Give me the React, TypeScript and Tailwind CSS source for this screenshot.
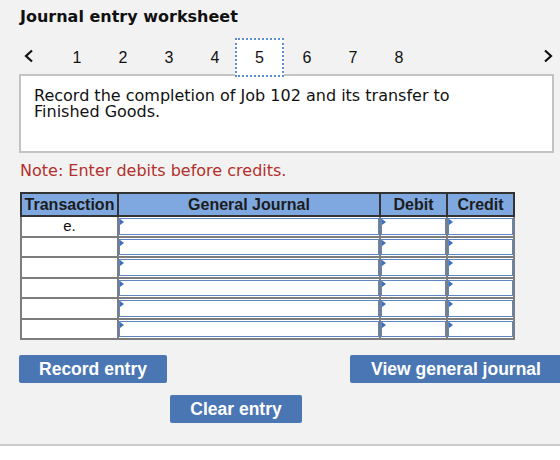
import React from 'react';

const tabs = [1, 2, 3, 4, 5, 6, 7, 8];
const rows = ['e.', '', '', '', '', ''];

const verdana = "font-['DejaVu_Sans',Verdana,sans-serif]";
const arial = "font-['Liberation_Sans',Arial,sans-serif]";

function Chevron({ dir }: { dir: 'left' | 'right' }) {
  return (
    <svg width="10" height="14" viewBox="0 0 10 14" className="block">
      <polyline
        points={dir === 'left' ? '8,1.5 2,7 8,12.5' : '2,1.5 8,7 2,12.5'}
        fill="none"
        stroke="#111"
        strokeWidth="2.2"
        strokeLinejoin="miter"
      />
    </svg>
  );
}

// input cell with the little blue marker in its corner
function EntryCell() {
  return (
    <td className="border-2 border-[#7d7d7d] bg-white p-0">
      <div className="relative h-[16.5px] border border-[#5d86c2]">
        <span className="absolute left-0 top-0 h-0 w-0 border-y-[3px] border-l-[4px] border-y-transparent border-l-[#3b6fc4]" />
      </div>
    </td>
  );
}

function Button({ label, className }: { label: string; className: string }) {
  return (
    <button
      className={`h-[28px] rounded-[2px] bg-[#4a77b4] text-[17.5px] font-bold text-white ${arial} ${className}`}
    >
      {label}
    </button>
  );
}

export default function App() {
  return (
    <div className="h-[460px] w-[560px] overflow-hidden bg-white">
      <div className="h-[446px] border-b-2 border-[#cbcbcb] bg-[#f2f2f2] pl-[19px] pr-[6px] pt-[8px]">
        <h1 className={`pl-px text-[16px] font-bold leading-[18px] text-[#111] ${verdana}`}>
          Journal entry worksheet
        </h1>

        <div className="mt-[12px] flex h-[39px] items-center">
          <div className="flex w-[35px] items-center pl-[5px] pb-[4px]">
            <Chevron dir="left" />
          </div>
          {tabs.map((t) =>
            t === 5 ? (
              <div
                key={t}
                className={`relative z-10 -ml-[3px] flex h-[39px] w-[49px] items-center justify-center border-2 border-dotted border-[#5b8bd0] bg-white text-[16px] text-[#111] ${arial}`}
              >
                {t}
              </div>
            ) : (
              <div
                key={t}
                className={`flex h-[39px] w-[46px] items-center justify-center text-[16px] text-[#111] ${arial}`}
              >
                {t}
              </div>
            )
          )}
          <div className="ml-auto pb-[4px] pr-[1px]">
            <Chevron dir="right" />
          </div>
        </div>

        <div className="-mt-[3px] h-[79px] border-2 border-[#c3c3c3] bg-white pl-[13px] pt-[12px]">
          <p className={`max-w-[440px] text-[16px] leading-[16px] text-[#111] ${verdana}`}>
            Record the completion of Job 102 and its transfer to Finished Goods.
          </p>
        </div>

        <p className={`mt-[9px] pl-px text-[16px] leading-[18px] text-[#b3302c] ${verdana}`}>
          Note: Enter debits before credits.
        </p>

        <table className={`mt-[12px] ml-px w-[493px] table-fixed border-collapse border-2 border-[#8a8a8a] ${arial}`}>
          <colgroup>
            <col className="w-[97px]" />
            <col className="w-[262px]" />
            <col className="w-[67px]" />
            <col className="w-[67px]" />
          </colgroup>
          <thead>
            <tr className="h-[23px] bg-[#7ea8df] text-[16px] font-bold text-[#1c1c1c]">
              <th className="border-2 border-[#333] p-0 leading-[18px]">Transaction</th>
              <th className="border-2 border-[#333] p-0 leading-[18px]">General Journal</th>
              <th className="border-2 border-[#333] p-0 leading-[18px]">Debit</th>
              <th className="border-2 border-[#333] p-0 leading-[18px]">Credit</th>
            </tr>
          </thead>
          <tbody>
            {rows.map((r, i) => (
              <tr key={i} className="h-[20.5px]">
                <td className="border-2 border-[#7d7d7d] bg-white p-0 text-center text-[15px] leading-[16px] text-[#111]">
                  {r}
                </td>
                <EntryCell />
                <EntryCell />
                <EntryCell />
              </tr>
            ))}
          </tbody>
        </table>

        <div className="-mr-[8px] mt-[15px] flex justify-between">
          <Button label="Record entry" className="w-[148px]" />
          <Button label="View general journal" className="w-[212px]" />
        </div>
        <div className="mt-[12px] pl-[151px]">
          <Button label="Clear entry" className="w-[132px]" />
        </div>
      </div>
    </div>
  );
}
